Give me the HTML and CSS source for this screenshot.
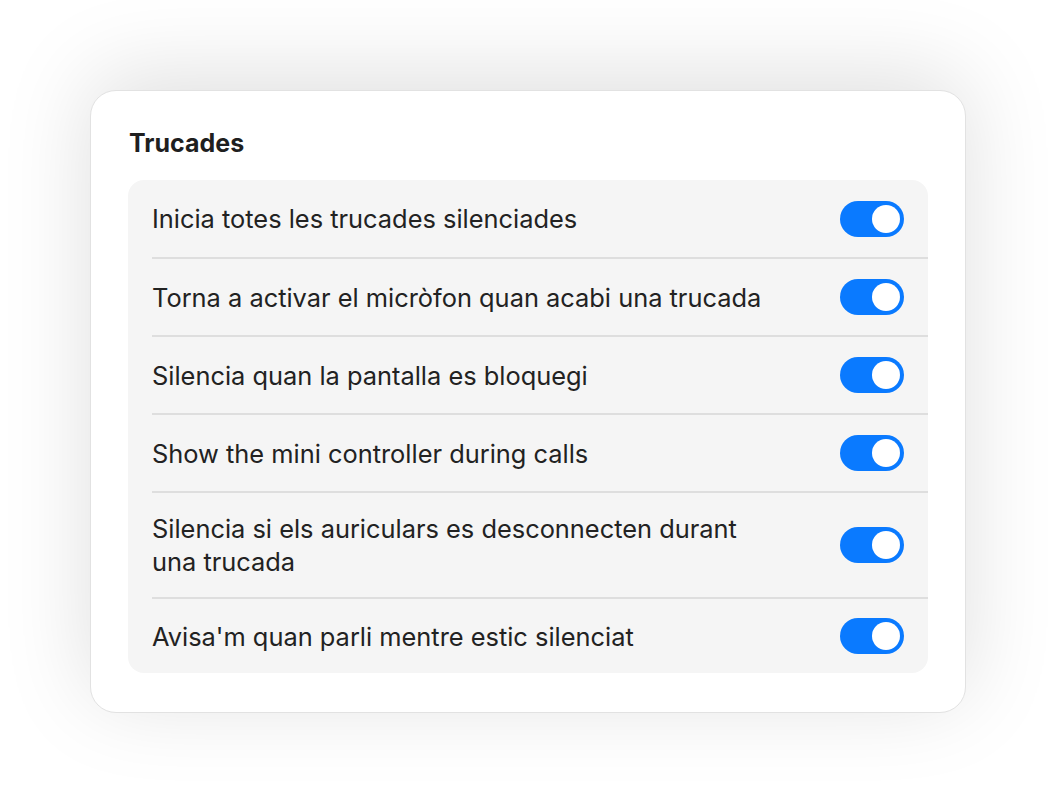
FILE: index.html
```html
<!DOCTYPE html>
<html lang="ca">
<head>
  <meta charset="UTF-8">
  <title>Trucades</title>
  <link rel="stylesheet" href="styles.css">
</head>
<body>

<div class="panel">
  <h2 class="panel-title">Trucades</h2>
  <div class="group">
    <div class="row">
      <span class="label">Inicia totes les trucades silenciades</span>
      <span class="toggle on"><span class="knob"></span></span>
    </div>
    <div class="row">
      <span class="label">Torna a activar el micròfon quan acabi una trucada</span>
      <span class="toggle on"><span class="knob"></span></span>
    </div>
    <div class="row">
      <span class="label">Silencia quan la pantalla es bloquegi</span>
      <span class="toggle on"><span class="knob"></span></span>
    </div>
    <div class="row">
      <span class="label">Show the mini controller during calls</span>
      <span class="toggle on"><span class="knob"></span></span>
    </div>
    <div class="row">
      <span class="label">Silencia si els auriculars es desconnecten durant una trucada</span>
      <span class="toggle on"><span class="knob"></span></span>
    </div>
    <div class="row">
      <span class="label">Avisa'm quan parli mentre estic silenciat</span>
      <span class="toggle on"><span class="knob"></span></span>
    </div>
  </div>
</div>

</body>
</html>
```

FILE: styles.css
```css
html, body {
  margin: 0;
  height: 100%;
}
body {
  box-sizing: border-box;
  min-height: 802px;
  padding: 90px 90px 0 90px;
  background: #ffffff;
  font-family: Inter, "Noto Sans", sans-serif;
  color: #222;
  overflow: hidden;
}
.panel {
  width: 800px;
  background: #fff;
  border: 1px solid #e2e2e2;
  border-radius: 26px;
  padding: 35px 37px 39px 37px;
  box-shadow: 0 -14px 90px rgba(0, 0, 0, 0.13);
}
.panel-title {
  margin: 0 0 20px 1px;
  font-size: 25px;
  font-weight: 700;
  line-height: 34px;
  color: #1f1f1f;
}
.group {
  background: #f5f5f5;
  border-radius: 16px;
  padding-left: 24px;
}
.row {
  display: flex;
  align-items: center;
  box-sizing: border-box;
  min-height: 77px;
  padding: 19px 24px 19px 0;
}
.row + .row {
  min-height: 78px;
  border-top: 2px solid #dedede;
}
.row:last-child {
  min-height: 76px;
}
.label {
  flex: 1;
  max-width: 615px;
  font-size: 25.4px;
  line-height: 33px;
  margin-right: auto;
}
.toggle {
  flex: 0 0 auto;
  width: 64px;
  height: 36px;
  border-radius: 18px;
  background: #0a7aff;
  position: relative;
}
.knob {
  position: absolute;
  top: 4px;
  right: 4px;
  width: 28px;
  height: 28px;
  border-radius: 50%;
  background: #fff;
}
```
